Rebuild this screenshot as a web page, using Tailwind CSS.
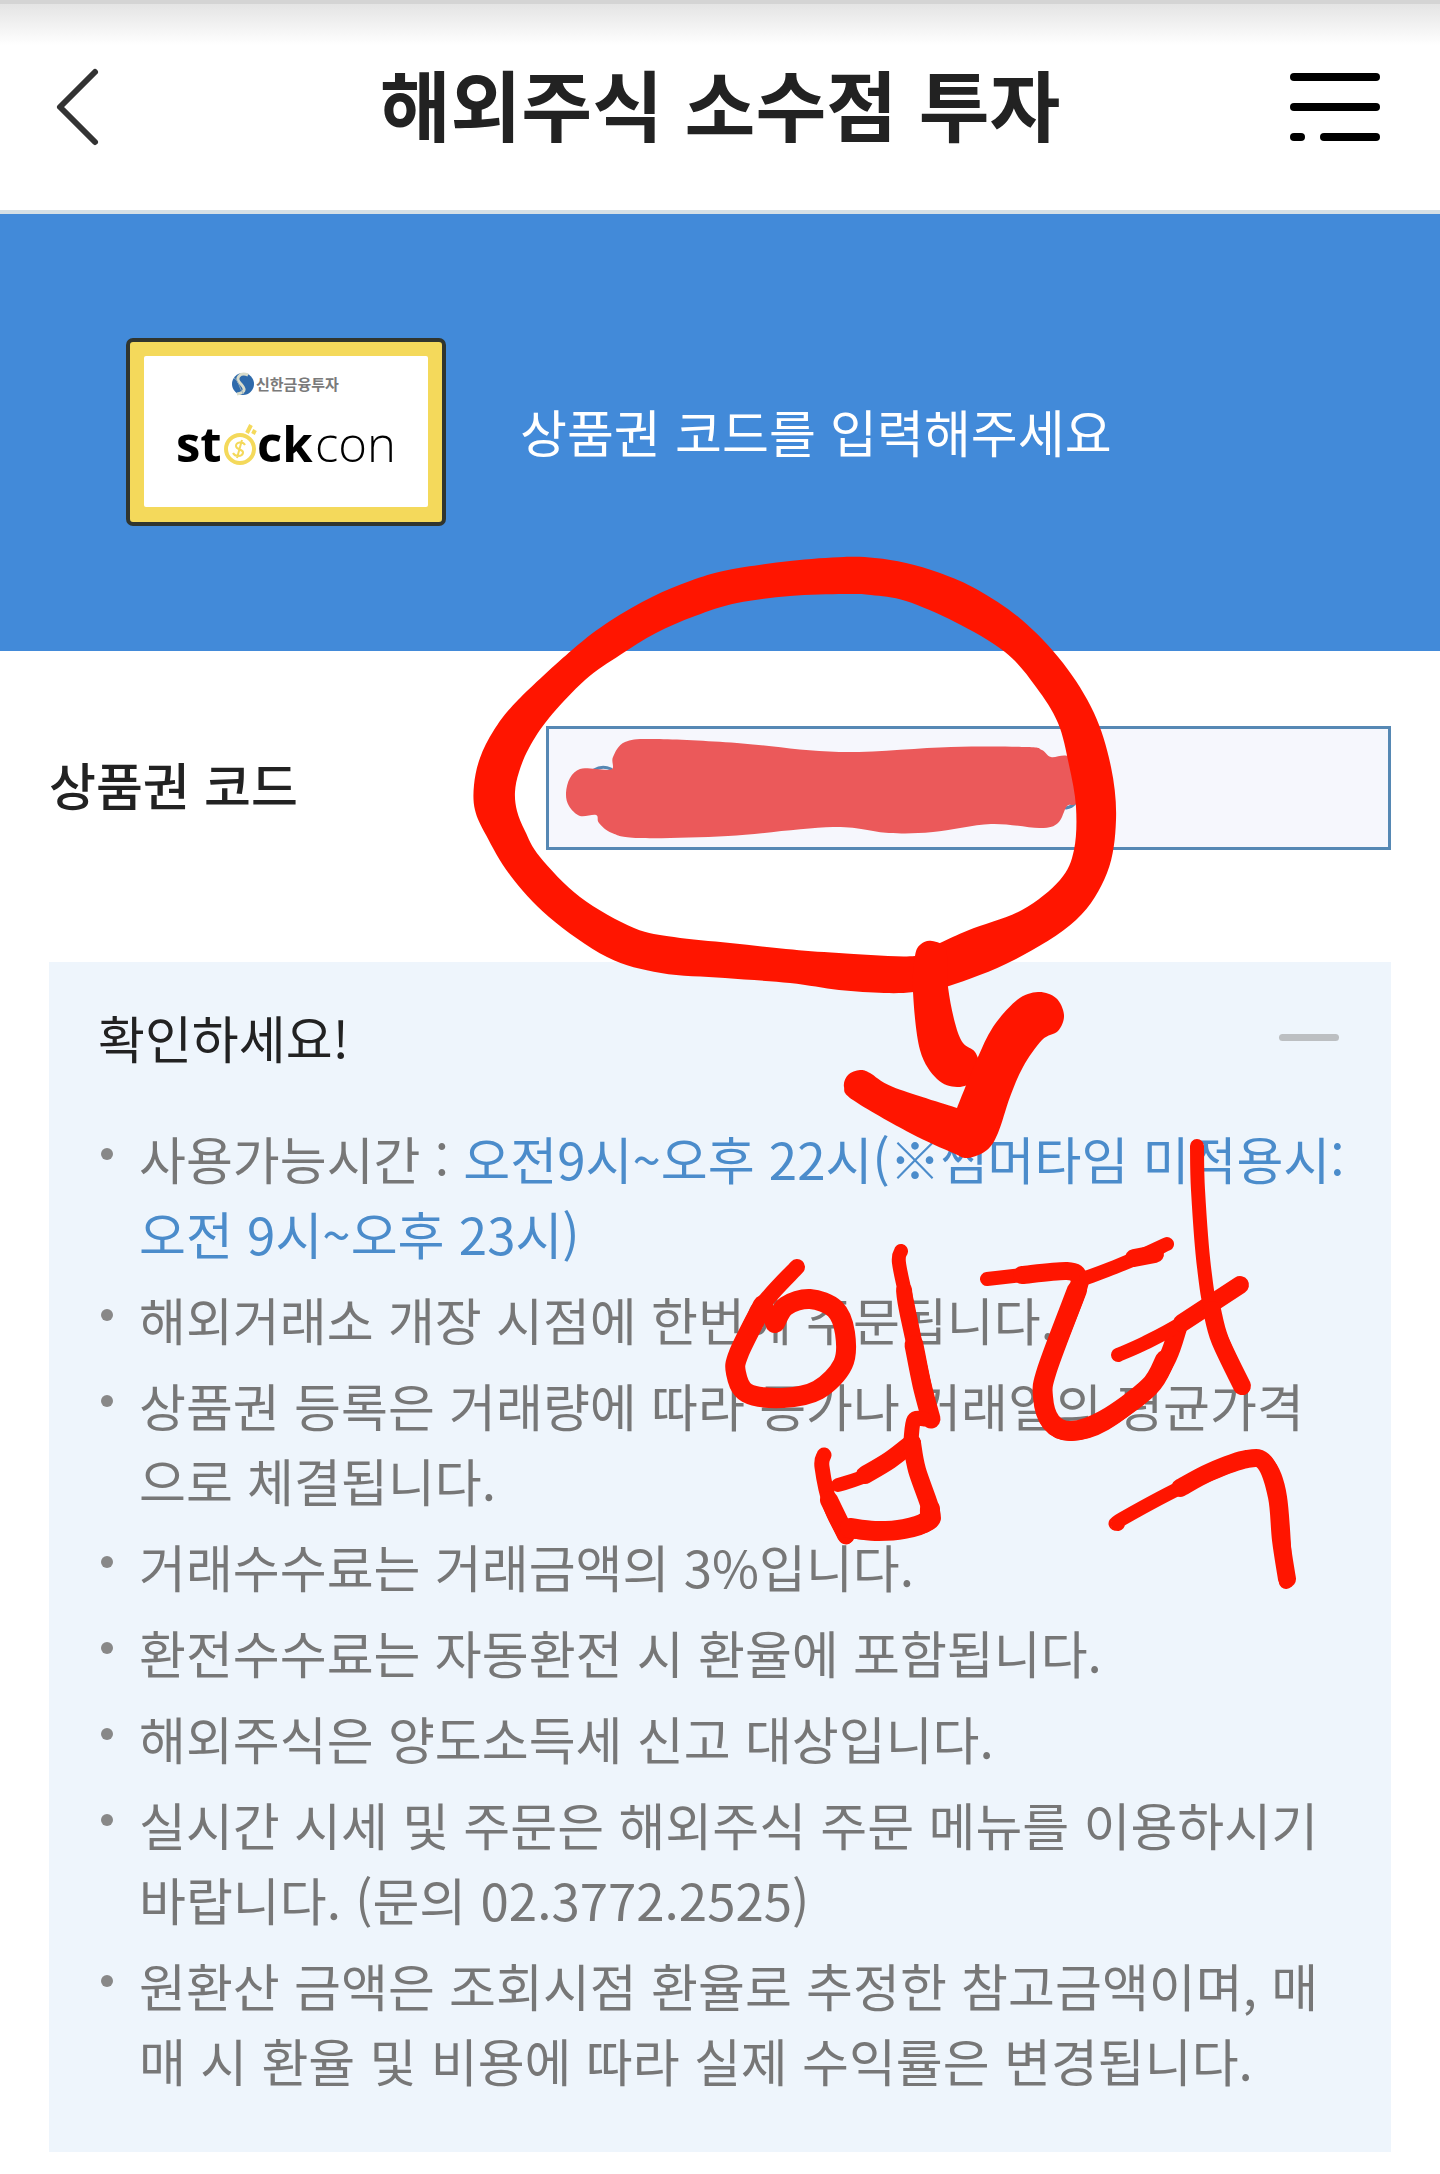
<!DOCTYPE html>
<html lang="ko">

<head>
    <meta charset="UTF-8">
    <meta name="viewport" content="width=device-width, initial-scale=1.0">
    <title>해외주식 소수점 투자</title>
    <script src="https://cdn.jsdelivr.net/npm/@tailwindcss/browser@4"></script>
</head>

<body class="relative bg-white text-[51px] leading-[75px] font-normal text-[#222] font-['Noto_Sans_CJK_KR',sans-serif]">
    <!-- Header -->
    <header class="border-b-4 border-[#d5e0e6]">
        <div class="h-1 bg-[#d4d4d4]"></div>
        <div class="h-[206px] bg-linear-to-b from-[#e4e4e4] to-white to-20% flex items-center justify-between px-12">
            <button type="button" aria-label="뒤로" class="w-[102px]">
                <svg class="w-14 h-20" viewBox="0 0 56 80" fill="none" stroke="#333" stroke-width="6"
                    stroke-linecap="round" stroke-linejoin="round">
                    <path d="M47 5L12 40l35 35" />
                </svg>
            </button>
            <h1 class="pb-2 text-[77px] leading-[100px] font-bold">해외주식 소수점 투자</h1>
            <button type="button" aria-label="메뉴">
                <svg class="w-[102px] h-20" viewBox="0 0 102 80" fill="#000">
                    <rect y="6" width="90" height="8" rx="4" />
                    <rect y="36" width="90" height="8" rx="4" />
                    <rect y="66" width="15" height="8" rx="4" />
                    <rect x="30" y="66" width="60" height="8" rx="4" />
                </svg>
            </button>
        </div>
    </header>

    <!-- Banner -->
    <section class="flex items-center gap-[74px] h-[437px] px-[126px] pb-0.5 bg-[#428ad9] text-white">
        <svg class="w-80 h-[188px] shrink-0" viewBox="0 0 320 188" role="img" aria-label="신한금융투자 stockcon">
            <rect x="2" y="2" width="316" height="184" rx="5" fill="#f4d95b" stroke="#30352f" stroke-width="4" />
            <rect x="18" y="18" width="284" height="151" rx="2" fill="#fff" />
            <circle cx="117" cy="46" r="11" fill="#2f6aab" />
            <path d="M122 37c-8-3-13 3-8 8s7 9-3 11" fill="none" stroke="#d9dccb" stroke-width="3" />
            <path d="M108 40c5 2 6 13 10 16" fill="none" stroke="#8fa9bd" stroke-width="1" />
            <text x="130" y="52" font-size="15" font-weight="700" fill="#7a7a7a">신한금융투자</text>
            <g font-family="Open Sans" font-size="49" fill="#000">
                <text x="50" y="124" font-weight="700">st</text>
                <text x="131" y="124" font-weight="700">ck</text>
                <text x="189" y="124" font-weight="300">con</text>
            </g>
            <g fill="none" stroke="#f4d95b">
                <circle cx="114" cy="111" r="14" stroke-width="4" />
                <path d="M121 95l4-8M127 96l2-4" stroke-width="4" />
                <path d="M119 107c-2-4-9-3-9 1s8 3 7 7-8 4-10 0M116 102l-5 18" stroke-width="2" />
            </g>
        </svg>
        <p>상품권 코드를 입력해주세요</p>
    </section>

    <main class="px-[49px] pb-[21px]">
        <!-- Code field -->
        <div class="flex items-center py-[75px]">
            <label for="code" class="w-[37%] pb-2 font-medium">상품권 코드</label>
            <input id="code" type="text"
                class="flex-1 min-w-0 h-[124px] px-10 border-3 border-[#5688b4] bg-[#f6f7fd] text-[#4b8ccb] outline-none">
        </div>

        <!-- Notice -->
        <section class="mt-[37px] pl-[49px] pr-9 pt-[38px] pb-[54px] bg-[#eef5fc]">
            <div class="flex items-center justify-between mb-[46px] pr-4">
                <h2>확인하세요!</h2>
                <button type="button" aria-label="접기" class="w-15 h-10 flex items-center">
                    <span class="w-full h-[7px] rounded-full bg-[#bcbfc2]"></span>
                </button>
            </div>
            <ul class="flex flex-col gap-[11px] pl-[3px] text-[#777]">
                <li class="flex"><span class="w-3 h-3 mt-[27px] mr-[26px] shrink-0 rounded-full bg-[#888]"></span>
                    <p>사용가능시간 : <span class="text-[#4b8ccb]">오전9시~오후 22시(※썸머타임 미적용시:<br>오전 9시~오후 23시)</span></p>
                </li>
                <li class="flex"><span class="w-3 h-3 mt-[27px] mr-[26px] shrink-0 rounded-full bg-[#888]"></span>
                    <p>해외거래소 개장 시점에 한번에 주문됩니다.</p>
                </li>
                <li class="flex"><span class="w-3 h-3 mt-[27px] mr-[26px] shrink-0 rounded-full bg-[#888]"></span>
                    <p>상품권 등록은 거래량에 따라 종가나 거래일의 평균가격<br>으로 체결됩니다.</p>
                </li>
                <li class="flex"><span class="w-3 h-3 mt-[27px] mr-[26px] shrink-0 rounded-full bg-[#888]"></span>
                    <p>거래수수료는 거래금액의 3%입니다.</p>
                </li>
                <li class="flex"><span class="w-3 h-3 mt-[27px] mr-[26px] shrink-0 rounded-full bg-[#888]"></span>
                    <p>환전수수료는 자동환전 시 환율에 포함됩니다.</p>
                </li>
                <li class="flex"><span class="w-3 h-3 mt-[27px] mr-[26px] shrink-0 rounded-full bg-[#888]"></span>
                    <p>해외주식은 양도소득세 신고 대상입니다.</p>
                </li>
                <li class="flex"><span class="w-3 h-3 mt-[27px] mr-[26px] shrink-0 rounded-full bg-[#888]"></span>
                    <p>실시간 시세 및 주문은 해외주식 주문 메뉴를 이용하시기<br>바랍니다. (문의 02.3772.2525)</p>
                </li>
                <li class="flex"><span class="w-3 h-3 mt-[27px] mr-[26px] shrink-0 rounded-full bg-[#888]"></span>
                    <p>원환산 금액은 조회시점 환율로 추정한 참고금액이며, 매<br>매 시 환율 및 비용에 따라 실제 수익률은 변경됩니다.</p>
                </li>
            </ul>
        </section>
    </main>

    <!-- Pen marks drawn over the page -->
    <svg id="marks" class="absolute top-0 left-0 w-full pointer-events-none" viewBox="0 0 1440 2174" fill="none"
        stroke-linecap="round" stroke-linejoin="round" aria-hidden="true">
        <path d="M594 770q8-5 17-1M1066 808q6-1 9-5" stroke="#5688b4" stroke-width="3" />
    </svg>

    <script>
        const marks = document.getElementById('marks');

        // Smooth curve through the points
        const curve = (flat, closed) => {
            const p = [];
            for (let i = 0; i < flat.length; i += 2) p.push([flat[i], flat[i + 1]]);
            const n = p.length;
            const at = (i) => closed ? p[(i + n) % n] : p[Math.max(0, Math.min(n - 1, i))];
            let d = `M${p[0]}`;
            for (let i = 0; i < (closed ? n : n - 1); i++) {
                const [a, b, c, e] = [at(i - 1), at(i), at(i + 1), at(i + 2)];
                d += `C${b[0] + (c[0] - a[0]) / 6} ${b[1] + (c[1] - a[1]) / 6} ${c[0] - (e[0] - b[0]) / 6} ${c[1] - (e[1] - b[1]) / 6} ${c}`;
            }
            return closed ? d + 'Z' : d;
        };

        const add = (attrs) => {
            const path = document.createElementNS('http://www.w3.org/2000/svg', 'path');
            Object.entries(attrs).forEach(([key, value]) => path.setAttribute(key, value));
            marks.appendChild(path);
        };

        // Cover over the code
        add({
            fill: '#eb595a',
            d: curve([580, 769, 596, 769, 612, 769, 613, 757, 625, 742, 656, 739, 737, 743, 839, 752, 951, 747, 1027, 747, 1042, 750, 1051, 757, 1069, 757, 1078, 780, 1076, 803, 1067, 806, 1058, 823, 1040, 828, 991, 824, 933, 832, 889, 833, 833, 827, 728, 836, 639, 838, 612, 833, 599, 823, 596, 815, 580, 816, 569, 806, 566, 793, 570, 778], true)
        });

        // Circle
        add({
            fill: '#ff1500', 'fill-rule': 'evenodd',
            d: curve([844, 557, 875, 558, 906, 563, 940, 573, 978, 590, 1022, 620, 1063, 663, 1094, 713, 1111, 767, 1116, 820, 1107, 873, 1076, 920, 1014, 960, 949, 986, 914, 992, 884, 993, 839, 990, 790, 983, 725, 978, 661, 973, 607, 957, 549, 917, 510, 875, 486, 835, 475, 810, 474, 785, 480, 758, 494, 730, 518, 700, 572, 650, 610, 621, 652, 597, 690, 581, 728, 570, 790, 561], true)
                + curve([844, 594, 871, 595, 906, 601, 955, 622, 1005, 652, 1036, 687, 1058, 723, 1069, 765, 1076, 807, 1074, 850, 1060, 880, 1022, 910, 969, 930, 940, 943, 915, 956, 839, 953, 786, 949, 730, 943, 674, 937, 634, 928, 580, 897, 540, 857, 525, 831, 517, 811, 515, 792, 519, 772, 529, 748, 549, 718, 585, 680, 620, 655, 656, 633, 695, 616, 737, 603, 790, 596], true)
        });

        // Arrow stem and head
        add({ fill: '#ff1500', d: curve([932, 941, 921, 944, 915, 956, 913, 992, 920, 1050, 937, 1079, 957, 1087, 974, 1081, 980, 1068, 975, 1052, 963, 1043, 955, 1023, 948, 987, 946, 950], true) });
        add({ fill: '#ff1500', d: curve([957, 1108, 957, 1108, 967, 1083, 978, 1057, 993, 1027, 1017, 1000, 1038, 992, 1056, 998, 1064, 1015, 1058, 1031, 1042, 1040, 1023, 1067, 1010, 1097, 998, 1133, 987, 1150, 968, 1158, 953, 1153, 910, 1133, 853, 1100, 844, 1087, 848, 1075, 860, 1070, 870, 1073, 893, 1087], true) });

        // Handwriting
        [
            [16, 797, 1267, 761, 1307, 739, 1353, 736, 1373, 747, 1393, 782, 1400],
            [20, 763, 1305, 739, 1353, 736, 1373, 747, 1393, 782, 1398, 818, 1390, 843, 1364, 845, 1333, 835, 1309, 810, 1299, 786, 1306, 775, 1323],
            [14, 901, 1251, 899, 1263, 908, 1307, 931, 1420],
            [16, 904, 1290, 908, 1315, 931, 1420],
            [19, 914, 1345, 922, 1385, 931, 1419],
            [15, 924, 1419, 914, 1420, 911, 1440],
            [15, 824, 1455, 822, 1467, 831, 1507, 846, 1537],
            [18, 829, 1500, 846, 1535],
            [14, 838, 1485, 871, 1473, 912, 1443],
            [18, 865, 1475, 890, 1460, 912, 1443],
            [18, 912, 1443, 917, 1470, 931, 1511, 928, 1522, 904, 1529, 875, 1531, 847, 1529],
            [20, 930, 1509, 927, 1521, 904, 1529, 875, 1531, 850, 1528],
            [14, 987, 1279, 1040, 1273],
            [18, 1022, 1275, 1067, 1271, 1079, 1278, 1075, 1297, 1047, 1370, 1043, 1397, 1051, 1423, 1071, 1432, 1104, 1422, 1149, 1387, 1168, 1357, 1178, 1328],
            [20, 1077, 1290, 1047, 1370, 1043, 1397, 1051, 1422, 1071, 1431, 1104, 1420, 1149, 1387, 1165, 1360],
            [14, 1086, 1278, 1115, 1267, 1141, 1256, 1167, 1244],
            [18, 1134, 1258, 1155, 1254],
            [14, 1118, 1355, 1145, 1343, 1182, 1323, 1241, 1284],
            [18, 1182, 1323, 1240, 1285],
            [14, 1197, 1146, 1198, 1190, 1204, 1267, 1214, 1320, 1243, 1388],
            [18, 1212, 1310, 1220, 1340, 1242, 1386],
            [14, 1118, 1524, 1122, 1519, 1190, 1483, 1247, 1460, 1267, 1463, 1280, 1497, 1286, 1582],
            [18, 1180, 1488, 1210, 1472, 1247, 1459, 1265, 1463, 1277, 1497, 1281, 1540, 1287, 1579],
        ].forEach(([width, ...points]) => add({ stroke: '#ff1500', 'stroke-width': width, d: curve(points, false) }));
    </script>
</body>

</html>
